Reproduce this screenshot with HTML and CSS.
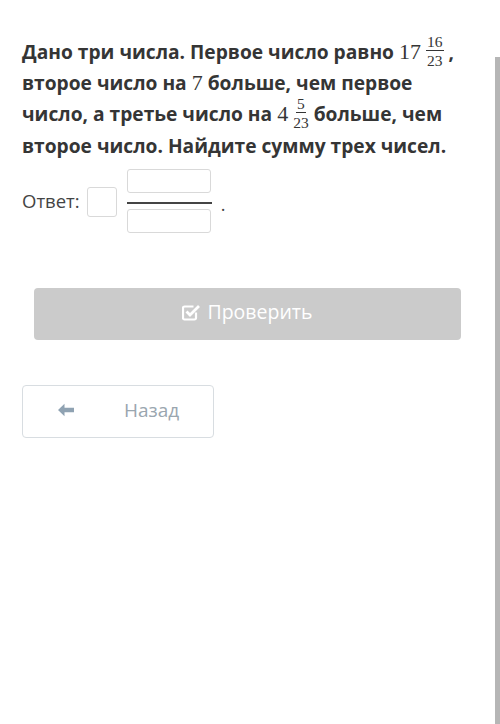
FILE: index.html
```html
<!DOCTYPE html>
<html lang="ru">
<head>
<meta charset="utf-8">
<link rel="stylesheet" href="styles.css">
</head>
<body>
<div class="page">
  <main class="content">
    <p class="task">Дано три числа. Первое число равно <span class="math">17<span class="frac"><span class="num">16</span><span class="den">23</span></span></span> , второе число на <span class="math">7</span> больше, чем первое число, а третье число на <span class="math">4<span class="frac"><span class="num">5</span><span class="den">23</span></span></span> больше, чем второе число. Найдите сумму трех чисел.</p>
    <div class="answer">
      <span class="answer-label">Ответ:</span>
      <span class="box whole"></span>
      <span class="fraction-input">
        <span class="box part"></span>
        <span class="bar"></span>
        <span class="box part"></span>
      </span>
      <span class="dot">.</span>
    </div>
    <div class="check-wrap">
      <button class="check">
        <svg class="check-icon" width="19" height="17" viewBox="0 0 19 17">
          <path d="M14 8.5v5.5a1.5 1.5 0 0 1-1.5 1.5h-10A1.5 1.5 0 0 1 1 14V4a1.5 1.5 0 0 1 1.5-1.5h9" fill="none" stroke="#fff" stroke-width="2.2"/>
          <path d="M4.5 7.5l3.5 3.5 9-9" fill="none" stroke="#fff" stroke-width="2.8"/>
        </svg>
        <span>Проверить</span>
      </button>
    </div>
    <button class="back">
      <svg class="back-icon" width="18" height="14" viewBox="0 0 18 14">
        <path d="M1 7l6.5-6.3v4h9.5v4.6h-9.5v4z" fill="#8fa2b2"/>
      </svg>
      <span>Назад</span>
    </button>
  </main>
  <aside class="strip"></aside>
</div>
</body>
</html>
```
FILE: styles.css
```css
html, body {
  margin: 0;
  padding: 0;
  background: #fff;
}
.page {
  display: flex;
  min-height: 724px;
  width: 500px;
}
.content {
  flex: 1;
  padding: 36px 0 0 22px;
  font-family: "Open Sans", sans-serif;
}
.strip {
  width: 5px;
  margin-top: 57px;
  background: #b6b6b6;
}
.task {
  margin: 0;
  width: 445px;
  font-weight: 700;
  font-size: 19.2px;
  line-height: 31.2px;
  color: #353535;
}
.math {
  font-family: "Liberation Serif", "DejaVu Serif", serif;
  font-weight: 400;
  font-size: 22px;
  line-height: 20px;
}
.frac {
  display: inline-flex;
  flex-direction: column;
  align-items: center;
  vertical-align: middle;
  margin: -8px 0 -8px 5px;
  font-size: 15.5px;
  line-height: 13px;
  position: relative;
  top: -3px;
}
.num {
  border-bottom: 1px solid #353535;
  padding: 0 1px 2px;
}
.den {
  padding-top: 3px;
}
.answer {
  display: flex;
  align-items: center;
  margin-top: 9px;
  height: 62px;
}
.answer-label {
  font-size: 18.5px;
  color: #444;
  margin-right: 7px;
}
.box {
  display: block;
  border: 1px solid #d9d9d9;
  border-radius: 3px;
  background: #fff;
}
.whole {
  width: 28px;
  height: 28px;
  margin-right: 10px;
  margin-top: 2px;
}
.fraction-input {
  display: flex;
  flex-direction: column;
  align-items: center;
}
.part {
  width: 82px;
  height: 22px;
}
.bar {
  display: block;
  width: 85px;
  height: 2px;
  background: #444;
  margin: 9px 0 5px;
}
.dot {
  font-size: 18px;
  color: #444;
  margin-left: 9px;
  margin-top: 6px;
}
.check-wrap {
  padding: 56px 34px 0 12px;
}
.check {
  width: 100%;
  height: 52px;
  border: 0;
  border-radius: 4px;
  background: #cbcbcb;
  color: #fff;
  font-family: "Open Sans", sans-serif;
  font-size: 19.5px;
  display: flex;
  align-items: center;
  justify-content: center;
  gap: 6px;
  padding: 0 0 4px;
}
.check-icon {
  margin-top: 2px;
}
.back {
  margin-top: 45px;
  width: 192px;
  height: 53px;
  border: 1px solid #d8dde1;
  border-radius: 4px;
  background: #fff;
  display: flex;
  align-items: center;
  padding: 0 0 2px 34px;
  font-family: "Open Sans", sans-serif;
  font-size: 19px;
  color: #9aa6af;
  box-sizing: border-box;
}
.back-icon {
  margin-right: 49px;
}
```
